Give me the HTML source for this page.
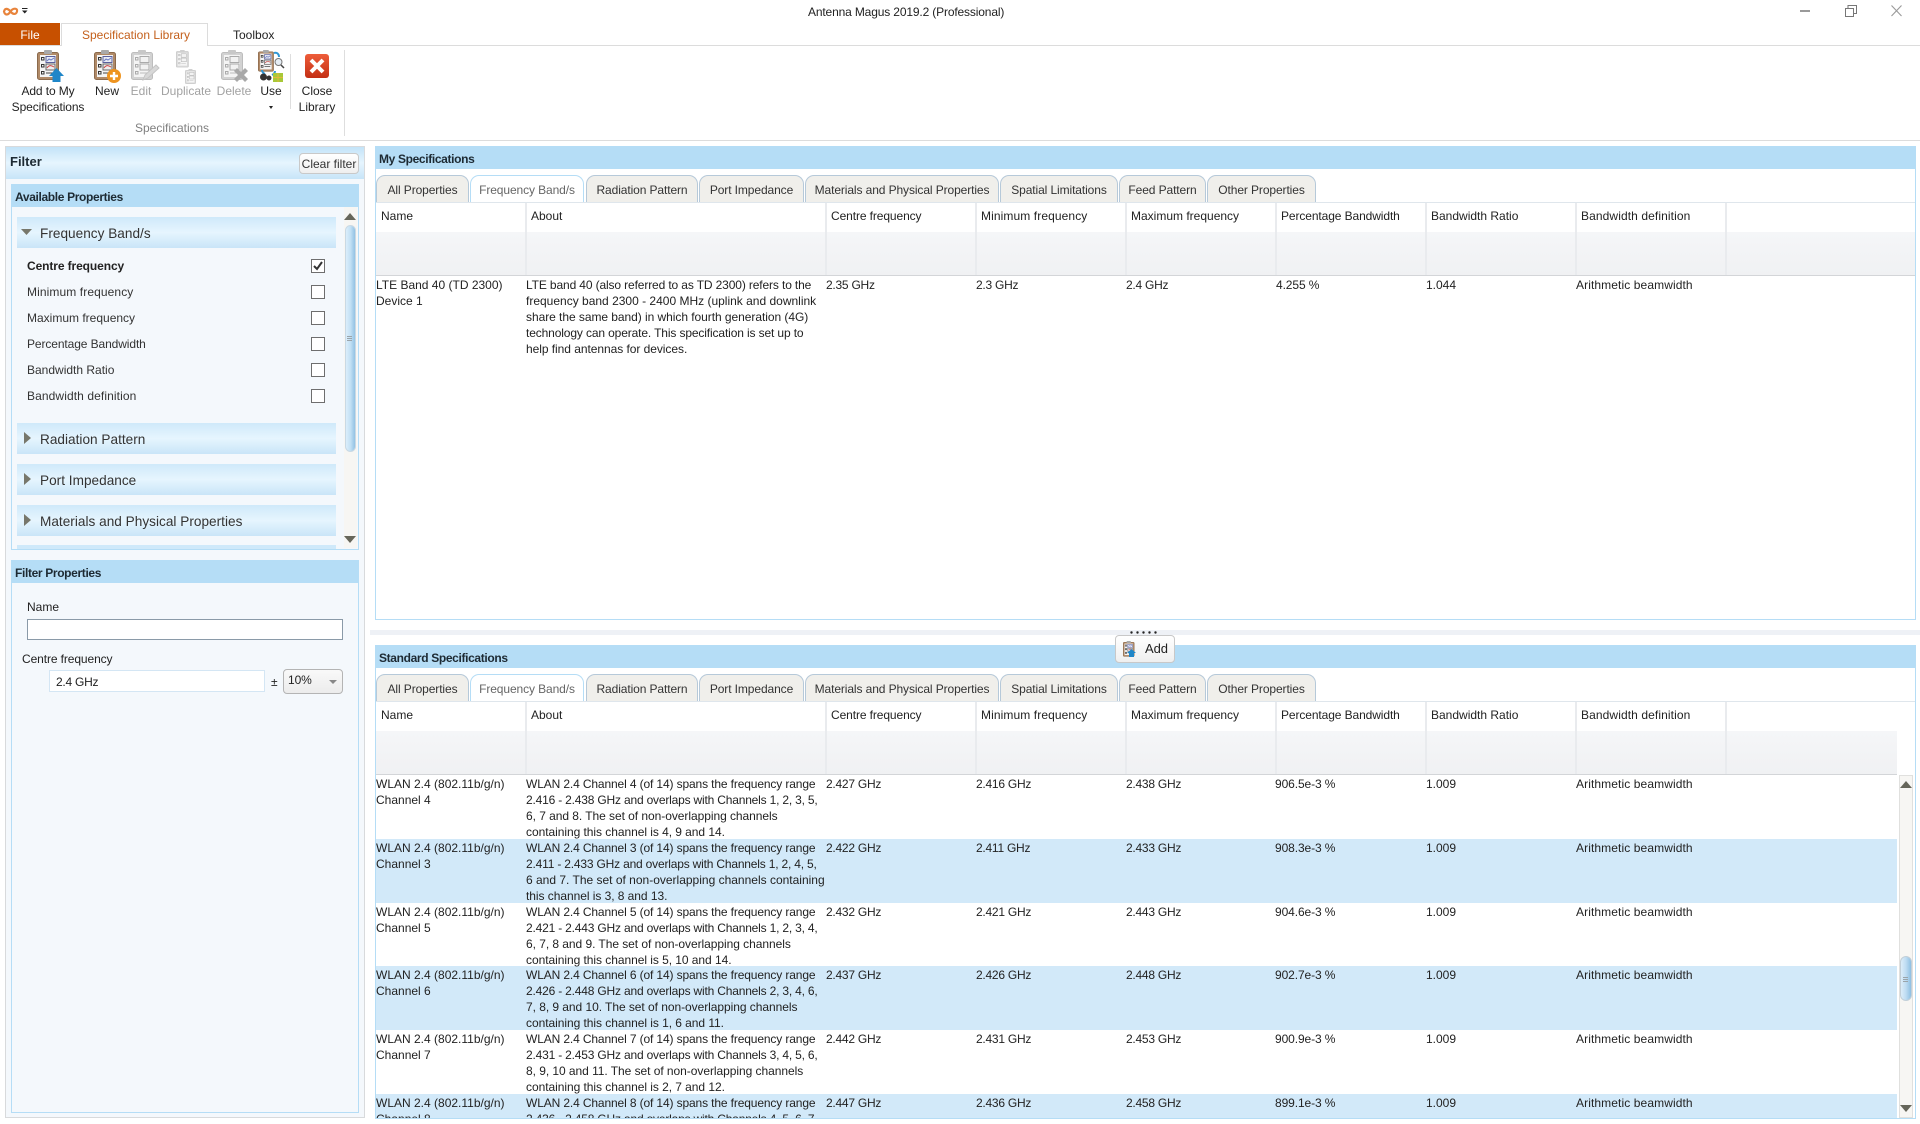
<!DOCTYPE html>
<html><head><meta charset="utf-8"><title>Antenna Magus</title>
<style>
html,body{margin:0;padding:0;background:#fff;}
body{position:relative;width:1920px;height:1124px;overflow:hidden;font:12px/16px "Liberation Sans",sans-serif;color:#222;}
.a{position:absolute;}
.t{position:absolute;white-space:nowrap;line-height:16px;}
.c{position:absolute;white-space:nowrap;line-height:16px;transform:translateX(-50%);}
.dis{color:#a2a2a2;}
.ab{letter-spacing:-.05px;}
.ab span{letter-spacing:-.13px;}
.ab span.n{letter-spacing:-.19px;}
.ab span.z{letter-spacing:0;}
.v{letter-spacing:-.25px;}
.w{letter-spacing:.1px;}
.m{letter-spacing:-.1px;}
.hdr{position:absolute;background:#b5ddf6;font-weight:bold;color:#1d2a33;height:23px;line-height:26px;padding-left:4px;box-sizing:border-box;letter-spacing:-.35px;}
.acc{position:absolute;left:17px;width:319px;background:linear-gradient(#cfe9fa,#e6f5fe 50%,#c9e5f8);height:31px;font-size:13.6px;line-height:33px;color:#333;padding-left:23px;box-sizing:border-box;letter-spacing:.02px;}
.tri{position:absolute;left:7px;top:9px;width:0;height:0;border-left:7px solid #77776b;border-top:6px solid transparent;border-bottom:6px solid transparent;}
.cb{position:absolute;left:311px;width:12px;height:12px;border:1px solid #6e6e6e;background:#fff;}
.tab{position:absolute;height:27px;box-sizing:border-box;background:#f0efeb;border:1px solid #b6c9d9;border-bottom:none;border-radius:9px 9px 0 0;text-align:center;line-height:29px;color:#333;letter-spacing:-.1px;}
.tab.on{background:#fff;color:#666;border-color:#b5ddf6;}
.sep{position:absolute;width:2px;background:#e9ebee;}
.fr{position:absolute;height:43px;background:linear-gradient(#f5f6f8,#f0f1f3);}
.row{position:absolute;left:376px;width:1521px;background:#d2e9f9;}
.arrowu{position:absolute;width:0;height:0;border-left:6px solid transparent;border-right:6px solid transparent;border-bottom:7px solid #66665a;}
.arrowd{position:absolute;width:0;height:0;border-left:6px solid transparent;border-right:6px solid transparent;border-top:7px solid #66665a;}
.grip{position:absolute;width:5px;height:1px;background:#9aa4aa;}
</style></head><body>
<svg width="0" height="0" style="position:absolute">
<defs>
<g id="clip">
<rect x="0.5" y="2.500" width="21" height="27" rx="2" fill="#b08a68" stroke="#8b6a4c"/>
<rect x="3" y="5" width="16" height="22" fill="#f4f4f4"/>
<rect x="7" y="0" width="8" height="4" rx="1" fill="#a9a9a9"/>
<rect x="4.500" y="7.500" width="2.500" height="2.500" fill="none" stroke="#333"/>
<rect x="4.500" y="14.500" width="2.500" height="2.500" fill="none" stroke="#333"/>
<rect x="4.500" y="21.500" width="2.500" height="2.500" fill="none" stroke="#333"/>
<rect x="9" y="6.500" width="9" height="6" fill="#e8ecf6" stroke="#5a5f9c"/>
<path d="M10 11l2-2 2 1 3-2" fill="none" stroke="#6c7cc4"/>
<rect x="9" y="14" width="9" height="6" fill="#eee" stroke="#666"/>
<path d="M10 18c2-3 4-3 7-1" fill="none" stroke="#c44"/>
<path d="M9 23h8" stroke="#444"/>
</g>
<g id="clipg">
<rect x="0.5" y="2.500" width="21" height="27" rx="2" fill="#d2d2d2" stroke="#bdbdbd"/>
<rect x="3" y="5" width="16" height="22" fill="#f4f4f4"/>
<rect x="7" y="0" width="8" height="4" rx="1" fill="#c8c8c8"/>
<rect x="4.500" y="7.500" width="2.500" height="2.500" fill="none" stroke="#aaa"/>
<rect x="4.500" y="14.500" width="2.500" height="2.500" fill="none" stroke="#aaa"/>
<rect x="4.500" y="21.500" width="2.500" height="2.500" fill="none" stroke="#aaa"/>
<rect x="9" y="6.500" width="9" height="6" fill="#f2f2f2" stroke="#aaa"/>
<rect x="9" y="14" width="9" height="6" fill="#f2f2f2" stroke="#aaa"/>
<path d="M9 23h8" stroke="#bbb"/>
</g>
</defs></svg>

<!-- title bar -->
<svg class="a" style="left:2px;top:5px" width="26" height="12" viewBox="0 0 26 12"><path d="M2 6.500c1-4 4-3 6.500 0s5.500 3.500 6.500 0-4-4-6.500 0-5.500 4-6.500 0z" fill="none" stroke="#e8843c" stroke-width="2.200"/><path d="M20 3h5.500v1H20zM20 5.500h5.500L22.750 8.500z" fill="#222"/></svg>
<div class="t" style="left:808px;top:4px;letter-spacing:-.15px">Antenna Magus 2019.2 (Professional)</div>
<div class="a" style="left:1800px;top:10px;width:10px;height:2px;background:#9a9a9a"></div>
<svg class="a" style="left:1845px;top:5px" width="12" height="12" viewBox="0 0 12 12"><path d="M.5 3.500h8v8h-8zM3 3V.5h8.500V8.500H9" fill="none" stroke="#777"/></svg>
<svg class="a" style="left:1891px;top:5px" width="12" height="12" viewBox="0 0 12 12"><path d="M.5.5l10 10.500M10.500.5L.5 11" fill="none" stroke="#999" stroke-width="1.100"/></svg>

<!-- ribbon tabs -->
<div class="a" style="left:0;top:23px;width:60px;height:23px;background:#c75000;color:#fff;text-align:center;line-height:24px;">File</div>
<div class="a" style="left:0;top:45px;width:1920px;height:1px;background:#dcdcdc"></div>
<div class="a" style="left:61px;top:23px;width:147px;height:23px;background:#fff;border:1px solid #dcdcdc;border-bottom:none;box-sizing:border-box;text-align:center;line-height:23px;color:#c4601c;padding-left:3px;">Specification Library</div>
<div class="t" style="left:233px;top:27px;">Toolbox</div>

<!-- ribbon icons -->
<svg class="a" style="left:36px;top:50px" width="30" height="34" viewBox="0 0 30 34"><use href="#clip" x="1" y="0"/><path d="M13 26l7.500-8 7.500 8h-3.500v6h-8v-6z" fill="#1f86c8"/></svg>
<svg class="a" style="left:93px;top:50px" width="30" height="34" viewBox="0 0 30 34"><use href="#clip" x="1" y="0"/><circle cx="21" cy="26" r="7" fill="#ee9420"/><path d="M17 26h8M21 22v8" stroke="#fff" stroke-width="2.400"/></svg>
<svg class="a" style="left:130px;top:50px" width="30" height="34" viewBox="0 0 30 34"><use href="#clipg" x="1" y="0"/><path d="M13 30l2-5 11-10 3 3-11 10z" fill="#d8d8d8" stroke="#c4c4c4"/></svg>
<svg class="a" style="left:175px;top:50px" width="24" height="34" viewBox="0 0 24 34"><g transform="translate(1 0) scale(.58)" opacity=".85"><use href="#clipg"/></g><g transform="translate(10 19) scale(.5)" opacity=".85"><use href="#clipg"/></g></svg>
<svg class="a" style="left:220px;top:50px" width="30" height="34" viewBox="0 0 30 34"><use href="#clipg" x="1" y="0"/><path d="M14 21l3-3 4 4 4-4 3 3-4 4 4 4-3 3-4-4-4 4-3-3 4-4z" fill="#a9a9a9"/></svg>
<svg class="a" style="left:258px;top:50px" width="28" height="33" viewBox="0 0 28 33"><g transform="scale(.72)"><use href="#clip"/></g><path d="M16 3c3-1 5 1 5 4M4 20c0 2 1 3 3 4M17 21c0 2-1 3-3 4" fill="none" stroke="#2e97d6" stroke-width="2"/><circle cx="20.500" cy="12" r="3.500" fill="#e6eef5" stroke="#777"/><path d="M23 15l3 3" stroke="#444" stroke-width="1.500"/><circle cx="5.500" cy="27" r="3.500" fill="#333"/><circle cx="11" cy="28" r="2.500" fill="#333"/><rect x="15" y="23" width="10" height="9" fill="#a8c838"/><path d="M20 23v9M15 27.500h10" stroke="#e2b83a"/></svg>
<svg class="a" style="left:305px;top:54px" width="25" height="25" viewBox="0 0 25 25"><defs><linearGradient id="rg" x1="0" y1="0" x2="0" y2="1"><stop offset="0" stop-color="#ee5d3a"/><stop offset="1" stop-color="#c32f14"/></linearGradient></defs><rect width="24" height="24" rx="3" fill="url(#rg)"/><path d="M6 6l12 12M18 6L6 18" stroke="#fff" stroke-width="4"/></svg>

<!-- ribbon text -->
<div class="c m" style="left:48px;top:83px;">Add to My</div>
<div class="c m" style="left:48px;top:99px;">Specifications</div>
<div class="c" style="left:107px;top:83px;">New</div>
<div class="c dis" style="left:141px;top:83px;">Edit</div>
<div class="c dis" style="left:186px;top:83px;">Duplicate</div>
<div class="c dis" style="left:234px;top:83px;">Delete</div>
<div class="c" style="left:271px;top:83px;">Use</div>
<div class="arrowd" style="left:269px;top:106px;border-left-width:2.500px;border-right-width:2.500px;border-top:3px solid #222"></div>
<div class="c" style="left:317px;top:83px;">Close</div>
<div class="c" style="left:317px;top:99px;">Library</div>
<div class="c" style="left:172px;top:120px;color:#808080">Specifications</div>
<div class="a" style="left:290px;top:54px;width:1px;height:55px;background:#dedede"></div>
<div class="a" style="left:344px;top:50px;width:1px;height:86px;background:#dedede"></div>
<div class="a" style="left:0;top:140px;width:1920px;height:1px;background:#dcdcdc"></div>

<!-- left pane -->
<div class="a" style="left:5px;top:146px;width:360px;height:972px;border:1px solid #d8dadc;box-sizing:border-box;background:#f4f8fc;"></div>
<div class="a" style="left:6px;top:147px;width:358px;height:32px;background:linear-gradient(#c3e3f8,#e6f5fe 50%,#c7e5f8);"></div>
<div class="t" style="left:10px;top:154px;font-weight:bold;font-size:13px;color:#1d2a33;">Filter</div>
<div class="a" style="left:299px;top:153px;width:60px;height:21px;border:1px solid #c9c9c9;border-radius:4px;box-sizing:border-box;background:linear-gradient(#fff,#efefef);text-align:center;line-height:21px;color:#333">Clear filter</div>

<div class="a" style="left:11px;top:184px;width:348px;height:366px;border:1px solid #b5ddf6;box-sizing:border-box;background:#f4f8fc;"></div>
<div class="hdr" style="left:11px;top:184px;width:348px;">Available Properties</div>
<div class="acc" style="top:217px;"><svg class="a" style="left:4px;top:12px" width="11" height="7"><path d="M0 0h11L5.500 6z" fill="#77776b"/></svg>Frequency Band/s</div>
<div class="t" style="left:27px;top:258px;font-weight:bold;letter-spacing:-.1px">Centre frequency</div>
<div class="t w" style="left:27px;top:284px;color:#333">Minimum frequency</div>
<div class="t" style="left:27px;top:310px;color:#333">Maximum frequency</div>
<div class="t m" style="left:27px;top:336px;color:#333">Percentage Bandwidth</div>
<div class="t" style="left:27px;top:362px;color:#333">Bandwidth Ratio</div>
<div class="t w" style="left:27px;top:388px;color:#333">Bandwidth definition</div>
<div class="cb" style="top:259px;"><svg class="a" style="left:1px;top:1px" width="10" height="10"><path d="M1 5l3 3 5-7" fill="none" stroke="#333" stroke-width="2"/></svg></div>
<div class="cb" style="top:285px;"></div>
<div class="cb" style="top:311px;"></div>
<div class="cb" style="top:337px;"></div>
<div class="cb" style="top:363px;"></div>
<div class="cb" style="top:389px;"></div>
<div class="acc" style="top:423px;"><span class="tri"></span>Radiation Pattern</div>
<div class="acc" style="top:464px;"><span class="tri"></span>Port Impedance</div>
<div class="acc" style="top:505px;"><span class="tri"></span>Materials and Physical Properties</div>
<div class="a" style="left:17px;top:545px;width:319px;height:4px;background:#cfe9fa"></div>
<!-- filter scrollbar -->
<div class="a" style="left:344px;top:207px;width:13px;height:341px;background:#f7f6f3;"></div>
<div class="arrowu" style="left:344px;top:213px;"></div>
<div class="a" style="left:345px;top:225px;width:11px;height:227px;border:1px solid #c9d9e4;box-sizing:border-box;border-radius:6px;background:linear-gradient(90deg,#dbeefb,#c2e0f4 50%,#92c2e4);"></div>
<div class="grip" style="left:347px;top:336px;"></div><div class="grip" style="left:347px;top:338px;"></div><div class="grip" style="left:347px;top:340px;"></div>
<div class="arrowd" style="left:344px;top:536px;"></div>

<div class="a" style="left:11px;top:560px;width:348px;height:553px;border:1px solid #b5ddf6;box-sizing:border-box;background:#f4f8fc;"></div>
<div class="hdr" style="left:11px;top:560px;width:348px;">Filter Properties</div>
<div class="t" style="left:27px;top:599px;">Name</div>
<div class="a" style="left:27px;top:619px;width:316px;height:21px;border:1px solid #8a9aa8;box-sizing:border-box;background:#fff"></div>
<div class="t m" style="left:22px;top:651px;">Centre frequency</div>
<div class="a" style="left:49px;top:670px;width:216px;height:22px;border:1px solid #d4e6f4;box-sizing:border-box;background:#fff"></div>
<div class="t v" style="left:56px;top:674px;">2.4 GHz</div>
<div class="t" style="left:271px;top:674px;">±</div>
<div class="a" style="left:283px;top:669px;width:60px;height:25px;border:1px solid #b4b4b4;border-radius:4px;box-sizing:border-box;background:linear-gradient(#f9f9f9,#ececec);"></div>
<div class="t m" style="left:288px;top:672px;">10%</div>
<div class="arrowd" style="left:329px;top:680px;border-left-width:4.500px;border-right-width:4.500px;border-top:4px solid #888"></div>

<!-- My Specifications -->
<div class="a" style="left:375px;top:146px;width:1541px;height:474px;border:1px solid #b5ddf6;box-sizing:border-box;background:#fff;"></div>
<div class="hdr" style="left:375px;top:146px;width:1541px;">My Specifications</div>
<div class="tab" style="left:376px;top:175px;width:93px;">All Properties</div>
<div class="tab on" style="left:470px;top:175px;width:114px;">Frequency Band/s</div>
<div class="tab" style="left:586px;top:175px;width:112px;">Radiation Pattern</div>
<div class="tab" style="left:699px;top:175px;width:105px;">Port Impedance</div>
<div class="tab" style="left:805px;top:175px;width:194px;">Materials and Physical Properties</div>
<div class="tab" style="left:1000px;top:175px;width:118px;">Spatial Limitations</div>
<div class="tab" style="left:1119px;top:175px;width:87px;">Feed Pattern</div>
<div class="tab" style="left:1207px;top:175px;width:109px;">Other Properties</div>
<div class="a" style="left:376px;top:202px;width:1539px;height:1px;background:#dfe6ec"></div>

<div class="fr" style="left:376px;top:232px;width:1539px;"></div>
<div class="a" style="left:376px;top:275px;width:1539px;height:1px;background:#d3d5d8"></div>
<div class="sep" style="left:525px;top:203px;height:72px"></div>
<div class="sep" style="left:825px;top:203px;height:72px"></div>
<div class="sep" style="left:975px;top:203px;height:72px"></div>
<div class="sep" style="left:1125px;top:203px;height:72px"></div>
<div class="sep" style="left:1275px;top:203px;height:72px"></div>
<div class="sep" style="left:1425px;top:203px;height:72px"></div>
<div class="sep" style="left:1575px;top:203px;height:72px"></div>
<div class="sep" style="left:1725px;top:203px;height:72px"></div>
<div class="t" style="left:381px;top:208px;">Name</div>
<div class="t" style="left:531px;top:208px;">About</div>
<div class="t m" style="left:831px;top:208px;">Centre frequency</div>
<div class="t w" style="left:981px;top:208px;">Minimum frequency</div>
<div class="t" style="left:1131px;top:208px;">Maximum frequency</div>
<div class="t m" style="left:1281px;top:208px;">Percentage Bandwidth</div>
<div class="t" style="left:1431px;top:208px;">Bandwidth Ratio</div>
<div class="t w" style="left:1581px;top:208px;">Bandwidth definition</div>

<div class="t" style="left:376px;top:277px;">LTE Band 40 (TD 2300)<br>Device 1</div>
<div class="t ab" style="left:526px;top:277px;"><span>LTE band 40 (also referred to as TD 2300) refers to the</span><br><span class="z">frequency band 2300 - 2400 MHz (uplink and downlink</span><br>share the same band) in which fourth generation (4G)<br><span>technology can operate. This specification is set up to</span><br>help find antennas for devices.</div>
<div class="t v" style="left:826px;top:277px;">2.35 GHz</div>
<div class="t v" style="left:976px;top:277px;">2.3 GHz</div>
<div class="t v" style="left:1126px;top:277px;">2.4 GHz</div>
<div class="t m" style="left:1276px;top:277px;">4.255 %</div>
<div class="t" style="left:1426px;top:277px;">1.044</div>
<div class="t w" style="left:1576px;top:277px;">Arithmetic beamwidth</div>

<!-- splitter -->
<div class="a" style="left:370px;top:630px;width:1550px;height:5px;background:#eef1f6"></div>
<svg class="a" style="left:1130px;top:631px" width="28" height="3"><g fill="#222"><circle cx="1.500" cy="1.500" r="1.200"/><circle cx="7.500" cy="1.500" r="1.200"/><circle cx="13.500" cy="1.500" r="1.200"/><circle cx="19.500" cy="1.500" r="1.200"/><circle cx="25.500" cy="1.500" r="1.200"/></g></svg>

<!-- Standard Specifications -->
<div class="a" style="left:375px;top:645px;width:1541px;height:474px;border:1px solid #b5ddf6;box-sizing:border-box;background:#fff;"></div>
<div class="hdr" style="left:375px;top:645px;width:1541px;">Standard Specifications</div>
<div class="a" style="left:1115px;top:635px;width:60px;height:28px;border:1px solid #c8c8c8;border-radius:4px;box-sizing:border-box;background:linear-gradient(#fff,#efefef);"></div>
<svg class="a" style="left:1123px;top:641px" width="15" height="17" viewBox="0 0 15 17"><g transform="scale(.52)"><use href="#clip"/></g><path d="M6 16v-4H4l4.500-4 4.500 4h-2v4z" fill="#1f86c8"/></svg>
<div class="t" style="left:1145px;top:641px;font-size:13px;letter-spacing:-.1px">Add</div>

<div class="tab" style="left:376px;top:674px;width:93px;">All Properties</div>
<div class="tab on" style="left:470px;top:674px;width:114px;">Frequency Band/s</div>
<div class="tab" style="left:586px;top:674px;width:112px;">Radiation Pattern</div>
<div class="tab" style="left:699px;top:674px;width:105px;">Port Impedance</div>
<div class="tab" style="left:805px;top:674px;width:194px;">Materials and Physical Properties</div>
<div class="tab" style="left:1000px;top:674px;width:118px;">Spatial Limitations</div>
<div class="tab" style="left:1119px;top:674px;width:87px;">Feed Pattern</div>
<div class="tab" style="left:1207px;top:674px;width:109px;">Other Properties</div>
<div class="a" style="left:376px;top:701px;width:1539px;height:1px;background:#dfe6ec"></div>

<div class="fr" style="left:376px;top:731px;width:1521px;"></div>
<div class="a" style="left:376px;top:774px;width:1521px;height:1px;background:#d3d5d8"></div>
<div class="sep" style="left:525px;top:702px;height:72px"></div>
<div class="sep" style="left:825px;top:702px;height:72px"></div>
<div class="sep" style="left:975px;top:702px;height:72px"></div>
<div class="sep" style="left:1125px;top:702px;height:72px"></div>
<div class="sep" style="left:1275px;top:702px;height:72px"></div>
<div class="sep" style="left:1425px;top:702px;height:72px"></div>
<div class="sep" style="left:1575px;top:702px;height:72px"></div>
<div class="sep" style="left:1725px;top:702px;height:72px"></div>
<div class="t" style="left:381px;top:707px;">Name</div>
<div class="t" style="left:531px;top:707px;">About</div>
<div class="t m" style="left:831px;top:707px;">Centre frequency</div>
<div class="t w" style="left:981px;top:707px;">Minimum frequency</div>
<div class="t" style="left:1131px;top:707px;">Maximum frequency</div>
<div class="t m" style="left:1281px;top:707px;">Percentage Bandwidth</div>
<div class="t" style="left:1431px;top:707px;">Bandwidth Ratio</div>
<div class="t w" style="left:1581px;top:707px;">Bandwidth definition</div>

<div class="row" style="top:839px;height:64px"></div>
<div class="row" style="top:966px;height:64px"></div>
<div class="row" style="top:1094px;height:24px"></div>

<div class="a" style="left:376px;top:775px;width:1521px;height:343px;overflow:hidden;">
<div style="position:absolute;left:-376px;top:-775px;width:1920px;height:1124px;">
<div class="t" style="left:376px;top:776px;">WLAN 2.4 (802.11b/g/n)<br>Channel 4</div>
<div class="t ab" style="left:526px;top:776px;"><span>WLAN 2.4 Channel 4 (of 14) spans the frequency range</span><br><span class="n">2.416 - 2.438 GHz and overlaps with Channels 1, 2, 3, 5,</span><br>6, 7 and 8. The set of non-overlapping channels<br>containing this channel is 4, 9 and 14.</div>
<div class="t v" style="left:826px;top:776px;">2.427 GHz</div><div class="t v" style="left:976px;top:776px;">2.416 GHz</div><div class="t v" style="left:1126px;top:776px;">2.438 GHz</div><div class="t m" style="left:1275px;top:776px;">906.5e-3 %</div><div class="t" style="left:1426px;top:776px;">1.009</div><div class="t w" style="left:1576px;top:776px;">Arithmetic beamwidth</div>

<div class="t" style="left:376px;top:840px;">WLAN 2.4 (802.11b/g/n)<br>Channel 3</div>
<div class="t ab" style="left:526px;top:840px;"><span>WLAN 2.4 Channel 3 (of 14) spans the frequency range</span><br><span class="n">2.411 - 2.433 GHz and overlaps with Channels 1, 2, 4, 5,</span><br><span class="z">6 and 7. The set of non-overlapping channels containing</span><br>this channel is 3, 8 and 13.</div>
<div class="t v" style="left:826px;top:840px;">2.422 GHz</div><div class="t v" style="left:976px;top:840px;">2.411 GHz</div><div class="t v" style="left:1126px;top:840px;">2.433 GHz</div><div class="t m" style="left:1275px;top:840px;">908.3e-3 %</div><div class="t" style="left:1426px;top:840px;">1.009</div><div class="t w" style="left:1576px;top:840px;">Arithmetic beamwidth</div>

<div class="t" style="left:376px;top:904px;">WLAN 2.4 (802.11b/g/n)<br>Channel 5</div>
<div class="t ab" style="left:526px;top:904px;"><span>WLAN 2.4 Channel 5 (of 14) spans the frequency range</span><br><span class="n">2.421 - 2.443 GHz and overlaps with Channels 1, 2, 3, 4,</span><br>6, 7, 8 and 9. The set of non-overlapping channels<br>containing this channel is 5, 10 and 14.</div>
<div class="t v" style="left:826px;top:904px;">2.432 GHz</div><div class="t v" style="left:976px;top:904px;">2.421 GHz</div><div class="t v" style="left:1126px;top:904px;">2.443 GHz</div><div class="t m" style="left:1275px;top:904px;">904.6e-3 %</div><div class="t" style="left:1426px;top:904px;">1.009</div><div class="t w" style="left:1576px;top:904px;">Arithmetic beamwidth</div>

<div class="t" style="left:376px;top:967px;">WLAN 2.4 (802.11b/g/n)<br>Channel 6</div>
<div class="t ab" style="left:526px;top:967px;"><span>WLAN 2.4 Channel 6 (of 14) spans the frequency range</span><br><span class="n">2.426 - 2.448 GHz and overlaps with Channels 2, 3, 4, 6,</span><br>7, 8, 9 and 10. The set of non-overlapping channels<br>containing this channel is 1, 6 and 11.</div>
<div class="t v" style="left:826px;top:967px;">2.437 GHz</div><div class="t v" style="left:976px;top:967px;">2.426 GHz</div><div class="t v" style="left:1126px;top:967px;">2.448 GHz</div><div class="t m" style="left:1275px;top:967px;">902.7e-3 %</div><div class="t" style="left:1426px;top:967px;">1.009</div><div class="t w" style="left:1576px;top:967px;">Arithmetic beamwidth</div>

<div class="t" style="left:376px;top:1031px;">WLAN 2.4 (802.11b/g/n)<br>Channel 7</div>
<div class="t ab" style="left:526px;top:1031px;"><span>WLAN 2.4 Channel 7 (of 14) spans the frequency range</span><br><span class="n">2.431 - 2.453 GHz and overlaps with Channels 3, 4, 5, 6,</span><br>8, 9, 10 and 11. The set of non-overlapping channels<br>containing this channel is 2, 7 and 12.</div>
<div class="t v" style="left:826px;top:1031px;">2.442 GHz</div><div class="t v" style="left:976px;top:1031px;">2.431 GHz</div><div class="t v" style="left:1126px;top:1031px;">2.453 GHz</div><div class="t m" style="left:1275px;top:1031px;">900.9e-3 %</div><div class="t" style="left:1426px;top:1031px;">1.009</div><div class="t w" style="left:1576px;top:1031px;">Arithmetic beamwidth</div>

<div class="t" style="left:376px;top:1095px;">WLAN 2.4 (802.11b/g/n)<br>Channel 8</div>
<div class="t ab" style="left:526px;top:1095px;"><span>WLAN 2.4 Channel 8 (of 14) spans the frequency range</span><br><span class="n">2.436 - 2.458 GHz and overlaps with Channels 4, 5, 6, 7,</span></div>
<div class="t v" style="left:826px;top:1095px;">2.447 GHz</div><div class="t v" style="left:976px;top:1095px;">2.436 GHz</div><div class="t v" style="left:1126px;top:1095px;">2.458 GHz</div><div class="t m" style="left:1275px;top:1095px;">899.1e-3 %</div><div class="t" style="left:1426px;top:1095px;">1.009</div><div class="t w" style="left:1576px;top:1095px;">Arithmetic beamwidth</div>
</div></div>

<!-- main scrollbar -->
<div class="a" style="left:1899px;top:775px;width:14px;height:343px;background:#f7f6f3;border:1px solid #e0e0de;box-sizing:border-box;"></div>
<div class="arrowu" style="left:1900px;top:781px;"></div>
<div class="a" style="left:1900px;top:956px;width:12px;height:45px;border:1px solid #c2cfd8;box-sizing:border-box;border-radius:6px;background:linear-gradient(90deg,#dcedf9,#bedcf2 50%,#8ebfe2);"></div>
<div class="grip" style="left:1903px;top:977px;"></div><div class="grip" style="left:1903px;top:979px;"></div><div class="grip" style="left:1903px;top:981px;"></div>
<div class="arrowd" style="left:1900px;top:1105px;"></div>
</body></html>
